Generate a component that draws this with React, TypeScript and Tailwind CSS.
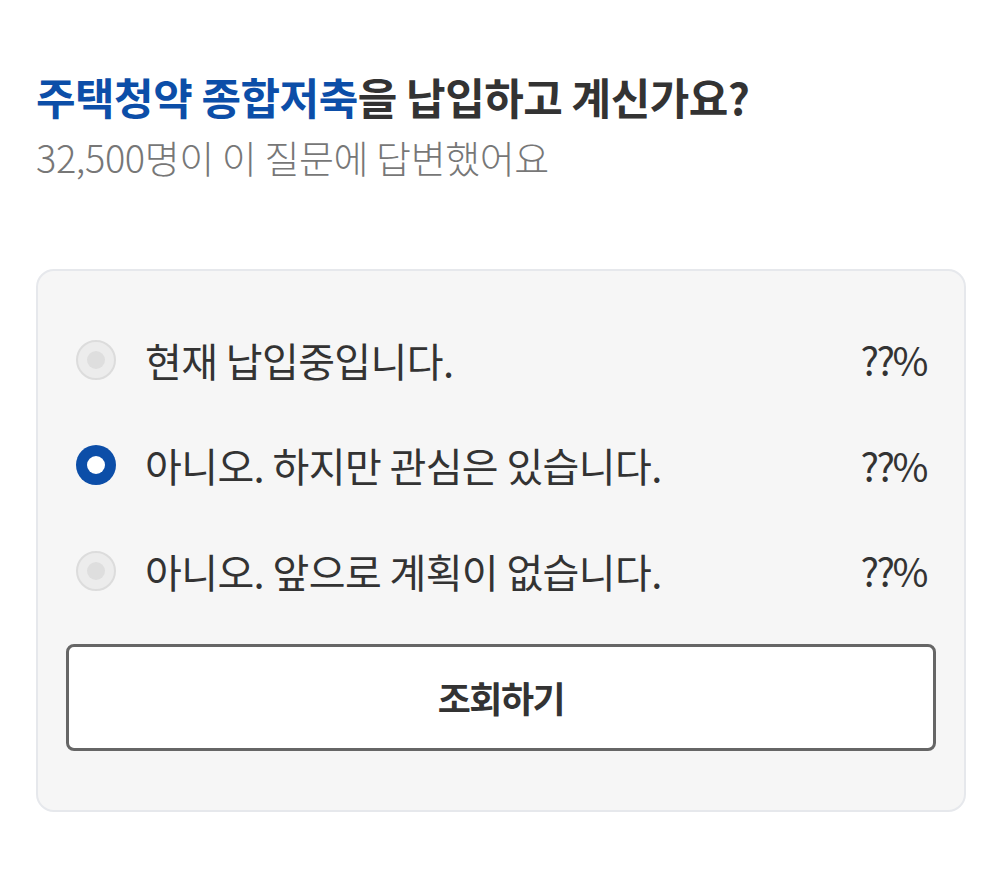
import { useState } from 'react'

const options = [
  '현재 납입중입니다.',
  '아니오. 하지만 관심은 있습니다.',
  '아니오. 앞으로 계획이 없습니다.',
]

function Radio({ checked }: { checked: boolean }) {
  if (checked) {
    return (
      <span className="flex h-10 w-10 shrink-0 items-center justify-center rounded-full bg-[#0c4ea8]">
        <span className="h-[18px] w-[18px] rounded-full bg-white" />
      </span>
    )
  }
  return (
    <span className="flex h-10 w-10 shrink-0 items-center justify-center rounded-full border-2 border-[#dcdcdc] bg-[#ececec]">
      <span className="h-[18px] w-[18px] rounded-full bg-[#dedede]" />
    </span>
  )
}

export default function App() {
  const [selected, setSelected] = useState(1)

  return (
    <div className="min-h-screen bg-white px-9 pt-[68px] font-['Noto_Sans_CJK_KR',sans-serif] text-[#333]">
      <h1 className="text-[43px] font-bold leading-[56px] tracking-[-0.5px]">
        <span className="text-[#0c4ea8]">주택청약 종합저축</span>을 납입하고 계신가요?
      </h1>
      <p className="mt-[8px] text-[38px] font-light leading-[50px] tracking-[-0.4px] text-[#777]">
        32,500명이 이 질문에 답변했어요
      </p>

      <div className="mt-[87px] rounded-[18px] border-2 border-[#e6e8ec] bg-[#f6f6f6] px-[28px] pb-[59px] pt-[36px]">
        <ul className="flex flex-col">
          {options.map((label, i) => (
            <li key={label}>
              <button
                type="button"
                onClick={() => setSelected(i)}
                className="flex h-[105.5px] w-full items-center pl-[10px] pr-[10px] text-left"
              >
                <Radio checked={selected === i} />
                <span className="ml-[29px] flex-1 text-[40px] leading-none tracking-[-0.6px] text-[#333]">
                  {label}
                </span>
                <span className="text-[39px] leading-none tracking-[-2.5px] text-[#333]">??%</span>
              </button>
            </li>
          ))}
        </ul>
        <button
          type="button"
          className="mt-[20px] flex h-[107px] w-full items-center justify-center rounded-lg border-[3px] border-[#666] bg-white text-[36px] font-bold tracking-[-1.5px] text-[#333]"
        >
          조회하기
        </button>
      </div>
    </div>
  )
}
